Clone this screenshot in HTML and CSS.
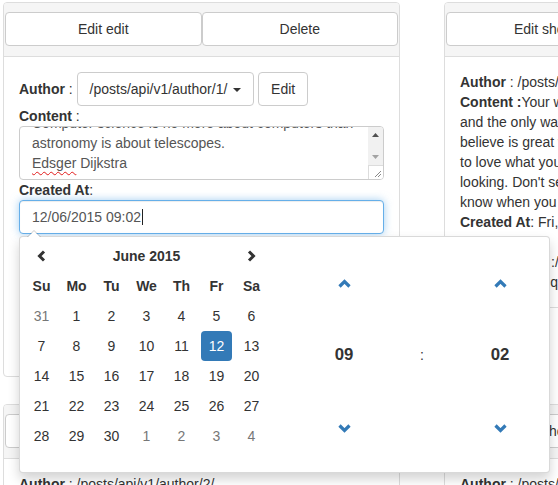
FILE: index.html
```html
<!DOCTYPE html>
<html>
<head>
<meta charset="utf-8">
<link rel="stylesheet" href="styles.css">
</head>
<body>
<div class="page">
  <div class="panel">
    <div class="panel-heading">
      <span class="btn">Edit edit</span>
      <span class="btn">Delete</span>
    </div>
    <div class="panel-body">
      <div class="author-row"><span><b>Author</b> :</span> <span class="btn">/posts/api/v1/author/1/ <span class="caret"></span></span> <span class="btn">Edit</span></div>
      <div class="lbl"><b>Content</b> :</div>
      <div class="textarea">
        <div class="ta-text">
          <div class="ta-lines">Computer science is no more about computers than<br>astronomy is about telescopes.<br><span class="spell">Edsger</span> Dijkstra</div>
        </div>
        <svg class="sb" width="15" height="52" viewBox="0 0 15 52">
          <rect x="0" y="0" width="15" height="38" fill="#f1f1f1"/>
          <path d="M4 10 L7.5 6 L11 10 Z" fill="#505050"/>
          <path d="M4 28 L7.5 32 L11 28 Z" fill="#a3a3a3"/>
          <rect x="0" y="38" width="15" height="14" fill="#fff"/>
          <path d="M0 38.5 H15 M0.5 38 V52" stroke="#dcdcdc" stroke-width="1" fill="none"/>
          <path d="M13 44 L7 50 M13 47 L10 50" stroke="#8a8a8a" stroke-width="1" fill="none"/>
        </svg>
      </div>
      <div class="lbl"><b>Created At</b>:</div>
      <div class="dt-wrap">
        <div class="input focus">12/06/2015 09:02<span class="cursor"></span></div>
        <div class="dtp">
          <div class="cal">
            <div class="cal-grid">
              <span class="nav"><svg width="9" height="12" viewBox="0 0 9 12"><polyline points="7,1.5 2.5,6 7,10.5" fill="none" stroke="#333" stroke-width="3"/></svg></span>
              <span class="month">June 2015</span>
              <span class="nav"><svg width="9" height="12" viewBox="0 0 9 12"><polyline points="2,1.5 6.5,6 2,10.5" fill="none" stroke="#333" stroke-width="3"/></svg></span>
              <span class="dow">Su</span><span class="dow">Mo</span><span class="dow">Tu</span><span class="dow">We</span><span class="dow">Th</span><span class="dow">Fr</span><span class="dow">Sa</span>
              <span class="day old">31</span><span class="day">1</span><span class="day">2</span><span class="day">3</span><span class="day">4</span><span class="day">5</span><span class="day">6</span>
              <span class="day">7</span><span class="day">8</span><span class="day">9</span><span class="day">10</span><span class="day">11</span><span class="day active">12</span><span class="day">13</span>
              <span class="day">14</span><span class="day">15</span><span class="day">16</span><span class="day">17</span><span class="day">18</span><span class="day">19</span><span class="day">20</span>
              <span class="day">21</span><span class="day">22</span><span class="day">23</span><span class="day">24</span><span class="day">25</span><span class="day">26</span><span class="day">27</span>
              <span class="day">28</span><span class="day">29</span><span class="day">30</span><span class="day old">1</span><span class="day old">2</span><span class="day old">3</span><span class="day old">4</span>
            </div>
          </div>
          <div class="time">
            <span class="tbtn"><svg width="13" height="9" viewBox="0 0 13 9"><polyline points="1.5,7.5 6.5,2.5 11.5,7.5" fill="none" stroke="#337ab7" stroke-width="3.2"/></svg></span>
            <span></span>
            <span class="tbtn"><svg width="13" height="9" viewBox="0 0 13 9"><polyline points="1.5,7.5 6.5,2.5 11.5,7.5" fill="none" stroke="#337ab7" stroke-width="3.2"/></svg></span>
            <span class="tval">09</span>
            <span class="tsep">:</span>
            <span class="tval">02</span>
            <span class="tbtn"><svg width="13" height="9" viewBox="0 0 13 9"><polyline points="1.5,1.5 6.5,6.5 11.5,1.5" fill="none" stroke="#337ab7" stroke-width="3.2"/></svg></span>
            <span></span>
            <span class="tbtn"><svg width="13" height="9" viewBox="0 0 13 9"><polyline points="1.5,1.5 6.5,6.5 11.5,1.5" fill="none" stroke="#337ab7" stroke-width="3.2"/></svg></span>
          </div>
        </div>
      </div>
      <div class="lbl lbl-more"><b>Modified At</b>:</div>
      <div class="box-more"></div>
    </div>
  </div>

  <div class="panel">
    <div class="panel-heading">
      <span class="btn">Edit show</span>
      <span class="btn">Delete</span>
    </div>
    <div class="panel-body show">
      <div><b>Author</b> : /posts/api/v1/author/1/</div>
      <div><b>Content :</b>Your work is going to fill a large part of your life, and the only way to be truly satisfied is to do what you believe is great work. And the only way to do great work is to love what you do. If you haven't found it yet, keep looking. Don't settle. As with all matters of the heart, you'll know when you find it.</div>
      <div><b>Created At</b>: Fri, 12 Jun 2015 09:02:00 GMT</div>
      <div><b>Modified At</b>:</div>
      <div><b>Resource Uri</b> :/posts/api/v1/post/2/</div>
      <div><b>Category</b> : all quotes</div>
    </div>
  </div>

  <div class="panel">
    <div class="panel-heading">
      <span class="btn">Edit show</span>
      <span class="btn">Delete</span>
    </div>
    <div class="panel-body show">
      <div><b>Author</b> : /posts/api/v1/author/2/</div>
      <div><b>Content :</b>Simplicity is prerequisite for reliability.</div>
    </div>
  </div>
  <div class="panel">
    <div class="panel-heading">
      <span class="btn">Edit show</span>
      <span class="btn">Delete</span>
    </div>
    <div class="panel-body show">
      <div><b>Author</b> : /posts/api/v1/author/1/</div>
      <div><b>Content :</b>Stay hungry, stay foolish.</div>
    </div>
  </div>
</div>
</body>
</html>
```

FILE: styles.css
```css
html, body {
  overflow: hidden;
}
body {
  margin: 0;
  background: #fff;
  color: #333;
  font-family: "Liberation Sans", Arial, sans-serif;
  font-size: 14px;
  line-height: 20px;
}
b {
  font-weight: bold;
}
.page {
  display: grid;
  grid-template-columns: 397px 397px;
  column-gap: 44px;
  row-gap: 27px;
  align-items: start;
  padding: 2px 0 0 3px;
  width: 900px;
}
.panel {
  border: 1px solid #ddd;
  border-radius: 4px;
  background: #fff;
}
.panel-heading {
  display: flex;
  padding: 9px 1px 10px;
  background: #f5f5f5;
  border-bottom: 1px solid #ddd;
  border-radius: 3px 3px 0 0;
}
.panel-heading .btn {
  flex: 1;
}
.btn {
  display: inline-block;
  box-sizing: border-box;
  padding: 6px 12px;
  border: 1px solid #ccc;
  border-radius: 4px;
  background: #fff;
  color: #333;
  line-height: 20px;
  text-align: center;
  white-space: nowrap;
}
.caret {
  display: inline-block;
  width: 0;
  height: 0;
  margin-left: 2px;
  vertical-align: middle;
  border-top: 4px solid #333;
  border-left: 4px solid transparent;
  border-right: 4px solid transparent;
}
.panel-body {
  padding: 15px;
}
.author-row {
  height: 34px;
  white-space: nowrap;
}
.lbl {
  height: 20px;
}
.textarea {
  display: flex;
  box-sizing: border-box;
  height: 54px;
  border: 1px solid #ccc;
  border-radius: 4px;
  overflow: hidden;
  background: #fff;
}
.ta-text {
  flex: 1;
  overflow: hidden;
  color: #555;
  padding: 0 12px;
}
.ta-lines {
  margin-top: -14px;
  white-space: nowrap;
}
.spell {
  text-decoration: underline wavy #e21b1b;
  text-decoration-thickness: 1px;
  text-underline-offset: 3px;
}
.sb {
  display: block;
  flex: none;
}
.dt-wrap {
  position: relative;
}
.input {
  box-sizing: border-box;
  height: 34px;
  padding: 6px 12px;
  border: 1px solid #ccc;
  border-radius: 4px;
  color: #555;
  background: #fff;
}
.input.focus {
  border-color: #66afe9;
  box-shadow: inset 0 1px 1px rgba(0, 0, 0, .075), 0 0 8px rgba(102, 175, 233, .6);
}
.cursor {
  display: inline-block;
  width: 1px;
  height: 16px;
  margin-left: 1px;
  background: #222;
  vertical-align: -3px;
}
.dtp {
  position: absolute;
  left: 0;
  top: 36px;
  z-index: 10;
  display: flex;
  box-sizing: border-box;
  width: 531px;
  height: 237px;
  padding: 4px;
  background: #fff;
  border: 1px solid rgba(0, 0, 0, .15);
  border-radius: 4px;
  box-shadow: 0 6px 12px rgba(0, 0, 0, .175);
}
.dtp::before {
  content: "";
  position: absolute;
  top: -7px;
  left: 7px;
  border-left: 7px solid transparent;
  border-right: 7px solid transparent;
  border-bottom: 7px solid rgba(0, 0, 0, .2);
}
.dtp::after {
  content: "";
  position: absolute;
  top: -6px;
  left: 8px;
  border-left: 6px solid transparent;
  border-right: 6px solid transparent;
  border-bottom: 6px solid #fff;
}
.cal {
  padding-left: 2px;
  flex: none;
}
.cal-grid {
  display: grid;
  grid-template-columns: repeat(7, 31px);
  grid-auto-rows: 30px;
  column-gap: 4px;
  align-items: center;
  text-align: center;
}
.nav {
  display: flex;
  justify-content: center;
  align-items: center;
  height: 30px;
}
.nav svg {
  display: block;
}
.month {
  grid-column: 2 / 7;
  font-weight: bold;
}
.dow {
  font-weight: bold;
}
.day {
  height: 30px;
  line-height: 30px;
  border-radius: 4px;
}
.day.old {
  color: #777;
}
.day.active {
  background: #337ab7;
  color: #fff;
}
.time {
  flex: none;
  display: grid;
  grid-template-columns: repeat(3, 78px);
  grid-template-rows: 72px 71px 76px;
  align-items: center;
  justify-items: center;
  margin-left: 38px;
  padding-top: 6px;
}
.tbtn svg {
  display: block;
}
.tval {
  font-weight: bold;
  font-size: 16.8px;
}
.tsep {
  color: #333;
}
.lbl-more {
  margin-top: 38px;
}
.box-more {
  box-sizing: border-box;
  height: 69px;
  border: 1px solid #ccc;
  border-radius: 4px;
}
```
